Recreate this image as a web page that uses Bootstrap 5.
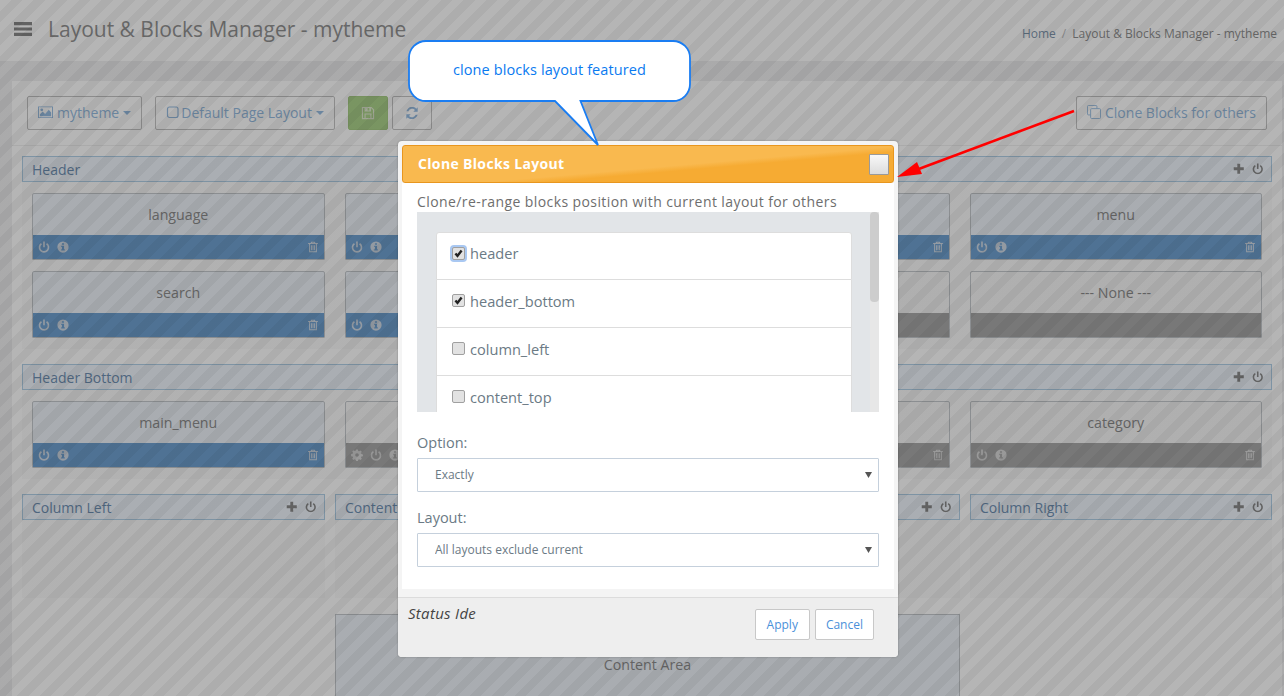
<!DOCTYPE html>
<html lang="en">
<head>
<meta charset="utf-8">
<title>Layout &amp; Blocks Manager</title>
<link href="https://cdn.jsdelivr.net/npm/bootstrap@5.3.0/dist/css/bootstrap.min.css" rel="stylesheet">
<style>
html,body{height:696px;overflow:hidden}
body{background:#f0f0f1;font-family:"Open Sans","Liberation Sans",sans-serif;font-size:14px;color:#8d8d8d;position:relative}
.ic{display:inline-block;width:1em;height:1em;fill:currentColor;vertical-align:-.125em}
.topbar{height:61px;background:#fff;padding:0 7px 0 14px}
.topbar .menu-ic{width:18px;height:18px;color:#8a8a8a;margin-right:16px;margin-top:-3px}
.page-title{font-size:21px;font-weight:400;color:#949494;margin:0 0 2px}
.crumbs{margin:7px 0 0;font-size:12px;--bs-breadcrumb-divider-color:#bbb;--bs-breadcrumb-item-active-color:#8f8f8f;--bs-breadcrumb-item-padding-x:6px;--bs-breadcrumb-margin-bottom:0}
.crumbs a{color:#7f96ad;text-decoration:none}
.sheet{margin:20px 2px 0 12px;background:#fff;padding:15px 10px 0}
.toolbar{border-bottom:1px solid #f0f0f0;margin:0 -10px 10px;padding:0 15px 15px}
.tool{height:34px;font-size:14px;padding:0 10px 2px;border:1px solid #c4c4c4;border-radius:2px;background:#fff;color:#96bbe0;display:inline-flex;align-items:center;gap:4px}
.tool:hover{background:#fff;color:#96bbe0}
.tool.dropdown-toggle::after{margin-left:0;margin-top:2px;border-top-width:.3em;border-left-width:.3em;border-right-width:.3em}
.w-save{width:40px;justify-content:center;padding:0;background:#abd28a;border-color:#a6cc84;color:#e0e8d0}
.w-save:hover{background:#abd28a;color:#e0e8d0}
.w-sync{width:40px;justify-content:center;padding:0;margin-left:4px}
.wide-ic{width:15px}
.tool-a{margin-right:13px}
.tool-b{margin-right:13px;gap:1px}
.tool-b.dropdown-toggle::after{margin-left:3px}
.zone-title{height:26px;background:#eff5fc;border:1px solid #b0cfe6;color:#6f90b3;display:flex;align-items:center;justify-content:space-between;padding:0 8px 0 9px;font-size:14px}
.zone-tools{display:flex;gap:7px;color:#8a8a8a;font-size:11.500px}
.zone-body{background:#fafafa;padding:11px 10px;display:grid;grid-template-columns:repeat(4,1fr);gap:11px 20px}
.zone{margin-bottom:15px}
.zone-2{margin-bottom:15px}
.block-box{height:67px;border:1px solid #c4c8cc;border-radius:2px 2px 1px 1px;background:#eef3f9;display:flex;flex-direction:column;overflow:hidden}
.block-box.off{background:#f7f7f7}
.block-name{flex:1;display:flex;align-items:center;justify-content:center;color:#8d8d8d;font-size:14.200px;padding-top:1px}
.block-bar{height:25px;margin:0 -1px -1px;background:#6fa0d0;color:#cfd9e4;display:flex;align-items:center;gap:7px;padding:0 6px 2px;font-size:12px}
.block-box.off .block-bar{background:#a9a9a9;color:#d8d8d8}
.block-bar .end{margin-left:auto}
.cols{display:grid;grid-template-columns:303px 625px 1fr;column-gap:10px}
.cols .zone-body{height:78px;display:block;padding:0}
.content-area{grid-column:2;height:102px;margin-top:16px;border:1px solid #c4c8cc;background:#eef3f9;display:flex;align-items:center;justify-content:center;font-size:14.200px;color:#8d8d8d}
.veil{position:absolute;inset:0;background:repeating-linear-gradient(135deg,rgba(0,0,0,.29) 0 8px,rgba(0,0,0,.32) 8px 16px)}
.dialog{position:absolute;left:398px;top:141px;width:500px;height:516px;background:#f4f4f4;border:0;border-radius:4px;padding:4px 4px 0;box-shadow:0 0 2px rgba(0,0,0,.3);display:flex;flex-direction:column}
.dialog-head{height:38px;flex:none;border:1px solid #e8961e;border-radius:3px;background:linear-gradient(175deg,#f9b94f 0 55%,#f6ab33 62%);color:#fff;font-weight:700;font-size:14px;letter-spacing:.34px;display:flex;align-items:center;justify-content:space-between;padding:0 4px 1px 15px}
.dialog-x{width:20px;height:21px;border:1px solid #9a9a9a;border-radius:1px;background:linear-gradient(#f8f8f8,#dcdcdc);padding:0;margin-top:1px}
.dialog-main{height:406px;flex:none;background:#fff;padding:10px 15px 0}
.lead-line{font-size:14px;line-height:18px;letter-spacing:.41px;color:#6e6e6e;margin:0 0 1px;white-space:nowrap}
.picker{height:200px;background:#e2e5e8;position:relative;overflow:hidden;padding:20px 27px 0 19px}
.picker::before{content:"";position:absolute;right:0;top:0;bottom:0;width:9px;background:#e7e7e7}
.picker::after{content:"";position:absolute;right:0;top:0;width:9px;height:90px;border-radius:4px;background:#cdcdcd}
.pick-list{--bs-list-group-border-color:#ddd;--bs-list-group-item-padding-y:0;--bs-list-group-item-padding-x:15px;--bs-list-group-border-radius:3px}
.pick-list .list-group-item{height:48px;display:flex;align-items:center;gap:5px;color:#6b7a85;font-size:14.600px;padding-bottom:4px}
.pick-list .form-check-input{margin:-2px 0 0;width:13px;height:13px;border:1px solid #a0a0a0;border-radius:2px;background-color:#e2e2e2;flex:none}
.pick-list .form-check-input:checked{background-color:#e2e2e2;border-color:#a0a0a0;background-image:url("data:image/svg+xml,%3csvg xmlns='http://www.w3.org/2000/svg' viewBox='0 0 16 16'%3e%3cpath fill='none' stroke='%23222' stroke-width='3.500' d='M3.500 8l3 3.500L12.500 3.500'/%3e%3c/svg%3e")}
.pick-list .glow{box-shadow:0 0 0 2px #a9c8f2}
.field-label{font-size:14.500px;color:#6b7a85;margin:0 0 5px;line-height:20px}
.field-1{margin-top:21px}
.field-2{margin-top:16px}
.pick-select{height:34px;border:1px solid #c5d0dc;border-radius:1px;font-size:12px;color:#6b7a85;padding:0 20px 0 17px;background-position:right 6px center;background-size:7px 6px;background-image:url("data:image/svg+xml,%3csvg xmlns='http://www.w3.org/2000/svg' viewBox='0 0 7 6'%3e%3cpath fill='%23555' d='M0 0h7L3.500 6z'/%3e%3c/svg%3e")}
.dialog-foot{flex:1;border-top:1px solid #dcdcdc;margin:8px -4px 0;background:#eee;padding:6px 24px 0 10px;display:flex;justify-content:space-between;align-items:flex-start;border-radius:0 0 4px 4px}
.dialog-foot em{color:#444;font-size:15px;letter-spacing:.3px;margin-top:-2px}
.foot-btn{height:31px;padding:0 11px;font-size:12px;background:#fff;border:1px solid #c8c8c8;border-radius:2px;color:#4a90d9;margin-left:5px;margin-top:5px}
.foot-btn:hover{background:#fff;color:#4a90d9}
.foot-btn-tight{padding:0 10px}
.notes{position:absolute;left:0;top:0;width:1284px;height:696px;pointer-events:none}
.bubble-text{position:absolute;left:408px;top:40px;width:283px;height:60px;display:flex;align-items:center;justify-content:center;color:#0a7af0;font-size:14.500px;letter-spacing:.1px}
</style>
</head>
<body>
<svg width="0" height="0" class="position-absolute">
<symbol id="i-bars" viewBox="0 0 18 18"><path d="M0 2h18v3.200H0zM0 7.400h18v3.200H0zM0 12.800h18V16H0z"/></symbol>
<symbol id="i-power" viewBox="0 0 16 16"><path fill="none" stroke="currentColor" stroke-width="2.200" d="M4.600 3.600a6 6 0 1 0 6.800 0"/><path d="M6.900 .6h2.200v7.600H6.900z"/></symbol>
<symbol id="i-info" viewBox="0 0 16 16"><path fill-rule="evenodd" d="M8 .5a7.500 7.500 0 1 1 0 15 7.500 7.500 0 0 1 0-15zM6.600 2.900v2.200h2.800V2.900zM5.600 6.200v1.700h1v3H5.600v1.700h4.800v-1.700h-1V6.200z"/></symbol>
<symbol id="i-trash" viewBox="0 0 16 16"><path fill-rule="evenodd" d="M5.600 1h4.800l.8 1.800H14.500v1.300H13.200V15H2.800V4.100H1.500V2.800h3.300zM6.500 2.800h3l-.3-.6H6.800zM4.200 4.100V13.600h7.600V4.100zM5.400 5.500h1.200v6.800H5.400zM7.400 5.500h1.200v6.800H7.400zM9.400 5.500h1.200v6.800H9.400z"/></symbol>
<symbol id="i-plus" viewBox="0 0 16 16"><path d="M6 1h4v5h5v4h-5v5H6v-5H1V6h5z"/></symbol>
<symbol id="i-cog" viewBox="0 0 16 16"><path fill-rule="evenodd" d="M6.800.5h2.400l.4 2 1.300.6 1.800-1.100 1.700 1.700-1.100 1.800.6 1.300 2 .4v2.400l-2 .4-.6 1.300 1.100 1.800-1.700 1.700-1.800-1.100-1.300.6-.4 2H6.800l-.4-2-1.300-.6-1.800 1.100-1.700-1.700 1.100-1.800-.6-1.300-2-.4V6.800l2-.4.6-1.300L1.600 3.300 3.300 1.600l1.800 1.100 1.300-.6zM8 5.600a2.400 2.400 0 1 0 0 4.800 2.400 2.400 0 0 0 0-4.800z"/></symbol>
<symbol id="i-picture" viewBox="0 0 16 14"><path fill-rule="evenodd" d="M0 1h16v12.500H0zM1 2v10.500h14V2zM2 11.500V9.500l3-3 2.500 2.500 4-4.500L14 7.500v4zM4 3.200a1.500 1.500 0 1 1 0 3 1.500 1.500 0 0 1 0-3z"/></symbol>
<symbol id="i-square" viewBox="0 0 14 14"><rect x="1.500" y="2" width="10.500" height="10.500" rx="2" fill="none" stroke="currentColor" stroke-width="1.200"/></symbol>
<symbol id="i-save" viewBox="0 0 16 16"><path fill-rule="evenodd" d="M1 1h11l3 3v11H1zM2.300 2.300v11.400h1.700V8.500h8v5.200h1.700V4.600l-2.200-2.300h-.1v4h-7.400v-4zM5.300 9.800v3.900h5.400V9.800zM7.500 2.300v2.800h2V2.300z"/></symbol>
<symbol id="i-sync" viewBox="0 0 16 16"><path d="M14.500 1.500v5h-5l1.900-1.900A4.600 4.600 0 0 0 3.800 6H1.600a6.800 6.800 0 0 1 11.300-3zM1.500 14.500v-5h5l-1.900 1.900A4.600 4.600 0 0 0 12.200 10h2.200a6.800 6.800 0 0 1-11.300 3z"/></symbol>
<symbol id="i-clone" viewBox="0.500 0.500 15.500 15.500"><path fill="none" stroke="currentColor" d="M4.500 11.500H2a1.200 1.200 0 0 1-1-1V2a1.200 1.200 0 0 1 1-1h8.500a1.200 1.200 0 0 1 1 1v2.500"/><rect x="4.500" y="4.500" width="11" height="11" rx="1.200" fill="none" stroke="currentColor"/></symbol>
</svg>

<header class="topbar d-flex justify-content-between">
  <div class="d-flex align-items-center">
    <svg class="ic menu-ic"><use href="#i-bars"/></svg>
    <h1 class="page-title">Layout &amp; Blocks Manager - mytheme</h1>
  </div>
  <nav class="d-flex align-items-center">
    <ol class="breadcrumb crumbs">
      <li class="breadcrumb-item"><a href="#">Home</a></li>
      <li class="breadcrumb-item active">Layout &amp; Blocks Manager - mytheme</li>
    </ol>
  </nav>
</header>

<main class="sheet">
  <div class="toolbar d-flex">
    <button class="btn tool tool-a dropdown-toggle"><svg class="ic wide-ic"><use href="#i-picture"/></svg>mytheme</button>
    <button class="btn tool tool-b dropdown-toggle"><svg class="ic"><use href="#i-square"/></svg>Default Page Layout</button>
    <button class="btn tool w-save"><svg class="ic"><use href="#i-save"/></svg></button>
    <button class="btn tool w-sync"><svg class="ic"><use href="#i-sync"/></svg></button>
    <button class="btn tool ms-auto"><svg class="ic"><use href="#i-clone"/></svg>Clone Blocks for others</button>
  </div>

  <section class="zone">
    <div class="zone-title"><span>Header</span><span class="zone-tools"><svg class="ic"><use href="#i-plus"/></svg><svg class="ic"><use href="#i-power"/></svg></span></div>
    <div class="zone-body">
      <div class="block-box"><div class="block-name">language</div><div class="block-bar"><svg class="ic"><use href="#i-power"/></svg><svg class="ic"><use href="#i-info"/></svg><svg class="ic end"><use href="#i-trash"/></svg></div></div>
      <div class="block-box"><div class="block-name"></div><div class="block-bar"><svg class="ic"><use href="#i-power"/></svg><svg class="ic"><use href="#i-info"/></svg><svg class="ic end"><use href="#i-trash"/></svg></div></div>
      <div class="block-box"><div class="block-name"></div><div class="block-bar"><svg class="ic"><use href="#i-power"/></svg><svg class="ic"><use href="#i-info"/></svg><svg class="ic end"><use href="#i-trash"/></svg></div></div>
      <div class="block-box"><div class="block-name">menu</div><div class="block-bar"><svg class="ic"><use href="#i-power"/></svg><svg class="ic"><use href="#i-info"/></svg><svg class="ic end"><use href="#i-trash"/></svg></div></div>
      <div class="block-box"><div class="block-name">search</div><div class="block-bar"><svg class="ic"><use href="#i-power"/></svg><svg class="ic"><use href="#i-info"/></svg><svg class="ic end"><use href="#i-trash"/></svg></div></div>
      <div class="block-box"><div class="block-name"></div><div class="block-bar"><svg class="ic"><use href="#i-power"/></svg><svg class="ic"><use href="#i-info"/></svg><svg class="ic end"><use href="#i-trash"/></svg></div></div>
      <div class="block-box off"><div class="block-name"></div><div class="block-bar"></div></div>
      <div class="block-box off"><div class="block-name">--- None ---</div><div class="block-bar"></div></div>
    </div>
  </section>

  <section class="zone zone-2">
    <div class="zone-title"><span>Header Bottom</span><span class="zone-tools"><svg class="ic"><use href="#i-plus"/></svg><svg class="ic"><use href="#i-power"/></svg></span></div>
    <div class="zone-body">
      <div class="block-box"><div class="block-name">main_menu</div><div class="block-bar"><svg class="ic"><use href="#i-power"/></svg><svg class="ic"><use href="#i-info"/></svg><svg class="ic end"><use href="#i-trash"/></svg></div></div>
      <div class="block-box off"><div class="block-name"></div><div class="block-bar"><svg class="ic"><use href="#i-cog"/></svg><svg class="ic"><use href="#i-power"/></svg><svg class="ic"><use href="#i-info"/></svg><svg class="ic end"><use href="#i-trash"/></svg></div></div>
      <div class="block-box off"><div class="block-name"></div><div class="block-bar"><svg class="ic"><use href="#i-power"/></svg><svg class="ic"><use href="#i-info"/></svg><svg class="ic end"><use href="#i-trash"/></svg></div></div>
      <div class="block-box off"><div class="block-name">category</div><div class="block-bar"><svg class="ic"><use href="#i-power"/></svg><svg class="ic"><use href="#i-info"/></svg><svg class="ic end"><use href="#i-trash"/></svg></div></div>
    </div>
  </section>

  <div class="cols">
    <section><div class="zone-title"><span>Column Left</span><span class="zone-tools"><svg class="ic"><use href="#i-plus"/></svg><svg class="ic"><use href="#i-power"/></svg></span></div><div class="zone-body"></div></section>
    <section><div class="zone-title"><span>Content Top</span><span class="zone-tools"><svg class="ic"><use href="#i-plus"/></svg><svg class="ic"><use href="#i-power"/></svg></span></div><div class="zone-body"></div></section>
    <section><div class="zone-title"><span>Column Right</span><span class="zone-tools"><svg class="ic"><use href="#i-plus"/></svg><svg class="ic"><use href="#i-power"/></svg></span></div><div class="zone-body"></div></section>
    <div class="content-area">Content Area</div>
  </div>
</main>

<div class="veil"></div>

<div class="card dialog">
  <div class="dialog-head"><span>Clone Blocks Layout</span><button class="dialog-x" aria-label="Close"></button></div>
  <div class="dialog-main">
    <p class="lead-line">Clone/re-range blocks position with current layout for others</p>
    <div class="picker">
      <div class="list-group pick-list">
        <label class="list-group-item"><input class="form-check-input glow" type="checkbox" checked>header</label>
        <label class="list-group-item"><input class="form-check-input" type="checkbox" checked>header_bottom</label>
        <label class="list-group-item"><input class="form-check-input" type="checkbox">column_left</label>
        <label class="list-group-item"><input class="form-check-input" type="checkbox">content_top</label>
      </div>
    </div>
    <p class="field-label field-1">Option:</p>
    <select class="form-select pick-select"><option>Exactly</option></select>
    <p class="field-label field-2">Layout:</p>
    <select class="form-select pick-select"><option>All layouts exclude current</option></select>
  </div>
  <div class="dialog-foot">
    <em>Status Ide</em>
    <div><button class="btn foot-btn">Apply</button><button class="btn foot-btn foot-btn-tight">Cancel</button></div>
  </div>
</div>

<svg class="notes" viewBox="0 0 1284 696">
  <path d="M426 41H673a17 17 0 0 1 17 17V84a17 17 0 0 1-17 17H580.500L598 145 555 101H426a17 17 0 0 1-17-17V58a17 17 0 0 1 17-17z" fill="#fff" stroke="#1a7df2" stroke-width="1.800"/>
  <path d="M1074 111 912 171.500" stroke="#f00" stroke-width="2.600" fill="none"/>
  <path d="M897 177 917 162 922 174z" fill="#f00"/>
</svg>
<div class="bubble-text">clone blocks layout featured</div>
<script src="https://cdn.jsdelivr.net/npm/bootstrap@5.3.0/dist/js/bootstrap.bundle.min.js"></script>
</body>
</html>
